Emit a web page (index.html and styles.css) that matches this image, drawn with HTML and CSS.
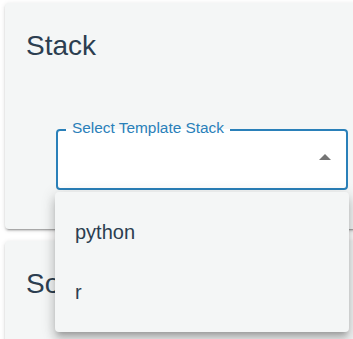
FILE: index.html
```html
<!DOCTYPE html>
<html lang="en">
<head>
    <meta charset="UTF-8">
    <meta name="viewport" content="width=device-width, initial-scale=1.0">
    <title>Template Stack</title>
    <link rel="stylesheet" href="styles.css">
</head>
<body>

<div class="page">
    <div class="card">
        <h2>Stack</h2>

        <div class="select-wrap">
            <fieldset class="select-field">
                <legend>Select Template Stack</legend>
                <div class="select-input">
                    <span class="arrow"></span>
                </div>
            </fieldset>

            <!-- Open dropdown menu -->
            <ul class="menu">
                <li>python</li>
                <li>r</li>
            </ul>
        </div>
    </div>

    <div class="card">
        <h2>Source</h2>
    </div>
</div>

</body>
</html>
```

FILE: styles.css
```css
body { font-family: "Liberation Sans", Arial, sans-serif; margin: 0; padding: 0; background: #fff; color: #2c3e50; overflow: hidden; }
.page { padding: 3px 0 0 5px; width: 400px; }

/* Cards */
.card { background: #f4f6f6; border-radius: 4px; padding: 23px 21px 39px; margin-bottom: 12px; box-shadow: 0 3px 1px -2px rgba(0, 0, 0, 0.2), 0 2px 2px 0 rgba(0, 0, 0, 0.14), 0 1px 5px 0 rgba(0, 0, 0, 0.12); }
.card h2 { font-size: 28px; font-weight: normal; line-height: 40px; margin: 0; }

/* Select field */
.select-wrap { position: relative; width: 292px; margin: 54px 0 0 30px; }
.select-field { margin: 0; padding: 0 8px; border: 2px solid #2a80b9; border-radius: 4px; background: #fff; }
.select-field legend { font-size: 15.4px; line-height: 16px; color: #2a80b9; padding: 0 6px 4px; }
.select-input { height: 48px; display: flex; justify-content: flex-end; align-items: flex-start; padding-right: 7px; box-sizing: border-box; padding-top: 14px; }
.arrow { width: 0; height: 0; border-left: 6px solid transparent; border-right: 6px solid transparent; border-bottom: 6px solid #757575; }

/* Dropdown menu */
.menu { position: absolute; left: -1px; top: 72px; width: 294px; list-style: none; margin: 0; padding: 10px 0; background: #f4f6f6; border-radius: 4px; box-shadow: 0 5px 5px -3px rgba(0, 0, 0, 0.2), 0 8px 10px 1px rgba(0, 0, 0, 0.14), 0 3px 14px 2px rgba(0, 0, 0, 0.12); }
.menu li { height: 60px; line-height: 60px; padding-left: 20px; font-size: 20px; }
```
